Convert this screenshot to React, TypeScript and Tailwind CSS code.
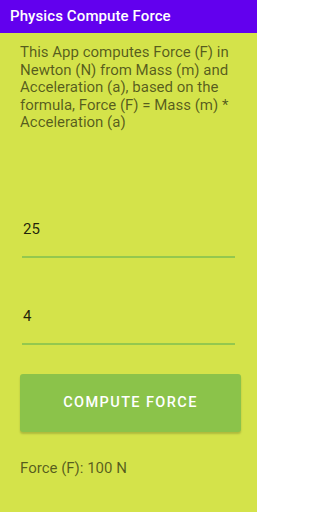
import { useState } from "react";

export default function App() {
  const [mass, setMass] = useState("25");
  const [accel, setAccel] = useState("4");
  const [force, setForce] = useState("100");

  const compute = () => {
    const f = parseFloat(mass) * parseFloat(accel);
    setForce(isNaN(f) ? "0" : String(f));
  };

  return (
    <div className="w-[257px] min-h-[512px] overflow-hidden bg-[#d4e34a] font-['Roboto',sans-serif]">
      <div className="h-[33px] bg-[#6200ee] px-[10px] flex items-center">
        <h1 className="text-white text-[15px] font-medium tracking-[0.1px]">Physics Compute Force</h1>
      </div>

      <div className="px-[20px]">
        <p className="mt-[11px] text-[15px] leading-[17.5px] text-black/60">
          This App computes Force (F) in Newton (N) from Mass (m) and Acceleration (a), based on the
          formula, Force (F) = Mass (m) * Acceleration (a)
        </p>

        <div className="mt-[85px] mx-[2px] border-b-2 border-[#94c84e] pb-[15px]">
          <input
            value={mass}
            onChange={(e) => setMass(e.target.value)}
            className="w-full bg-transparent outline-none text-[15px] leading-[18px] h-[18px] text-black/85 pl-px"
          />
        </div>

        <div className="mt-[46px] mx-[2px] border-b-2 border-[#94c84e] pb-[15px]">
          <input
            value={accel}
            onChange={(e) => setAccel(e.target.value)}
            className="w-full bg-transparent outline-none text-[15px] leading-[18px] h-[18px] text-black/85 pl-px"
          />
        </div>

        <button
          onClick={compute}
          className="mt-[29px] w-[221px] h-[58px] rounded-[3px] bg-[#8bc34a] text-white text-[14.5px] font-medium tracking-[1.4px] shadow-[0_2px_2px_rgba(0,0,0,0.18)]"
        >
          COMPUTE FORCE
        </button>

        <p className="mt-[27px] text-[15px] leading-[18px] text-black/60">Force (F): {force} N</p>
      </div>
    </div>
  );
}
